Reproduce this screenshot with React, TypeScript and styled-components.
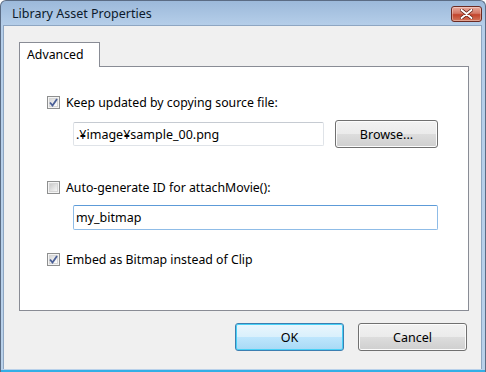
import styled, { createGlobalStyle, css } from "styled-components";

const GlobalStyle = createGlobalStyle`
  html, body {
    margin: 0;
    padding: 0;
    background: #ffffff;
  }
  body {
    font-family: "Noto Sans", "Liberation Sans", sans-serif;
    font-size: 12.3px;
    color: #000;
  }
`;

const Window = styled.div`
  width: 486px;
  height: 372px;
  box-sizing: border-box;
  display: flex;
  flex-direction: column;
  border: 1px solid #5b6c84;
  border-bottom: none;
  border-radius: 6px 6px 0 0;
  background: linear-gradient(#9cb9da 0px, #b5cee9 24px, #b9d1ea 100%);
  padding: 0 3px 3px 2px;
  overflow: hidden;
  position: relative;

  &::after {
    content: "";
    position: absolute;
    left: 0;
    right: 0;
    bottom: 0;
    height: 2px;
    background: #33afe6;
  }
`;

const TitleBar = styled.div`
  height: 24px;
  display: flex;
  align-items: center;
  justify-content: space-between;
  padding: 0 0 0 9px;
`;

const Title = styled.span`
  font-size: 12.5px;
  color: #0c1a2c;
  margin-top: 1px;
`;

const CloseButton = styled.div`
  width: 31px;
  height: 16px;
  box-sizing: border-box;
  margin-top: 1px;
  border: 1px solid #6b2a22;
  border-radius: 3px;
  background: linear-gradient(#e9a99c 0%, #d47866 45%, #c3442c 55%, #d2765c 100%);
  display: flex;
  align-items: center;
  justify-content: center;
  box-shadow: inset 0 0 0 1px rgba(255, 255, 255, 0.35);
`;

const Body = styled.div`
  flex: 1;
  background: #f0f0f0;
  border: 1px solid #8ea6c2;
  border-bottom: none;
  padding: 15px 12px 0 15px;
  display: flex;
  flex-direction: column;
`;

const TabStrip = styled.div`
  display: flex;
  height: 25px;
`;

const Tab = styled.div`
  width: 81px;
  box-sizing: border-box;
  background: #ffffff;
  border: 1px solid #898c95;
  border-bottom: none;
  padding: 3px 0 0 7px;
  position: relative;
  top: 1px;
  z-index: 1;
`;

const Panel = styled.div`
  height: 245px;
  box-sizing: border-box;
  background: #ffffff;
  border: 1px solid #898c95;
  padding: 27px 30px 0 27px;
  display: flex;
  flex-direction: column;
`;

const CheckRow = styled.label<{ $gap?: number }>`
  display: flex;
  align-items: center;
  gap: 6px;
  height: 16px;
  margin-top: ${(p) => p.$gap ?? 0}px;
`;

const Box = styled.span<{ $checked?: boolean }>`
  width: 13px;
  height: 13px;
  box-sizing: border-box;
  border: 1px solid #8e8f8f;
  background: #f4f4f4;
  display: flex;
  align-items: center;
  justify-content: center;
  position: relative;
  &::before {
    content: "";
    position: absolute;
    inset: 1px;
    border: 1px solid #d6d6d6;
    background: linear-gradient(135deg, #cbcbcb, #f6f6f6);
  }
  ${(p) =>
    p.$checked &&
    css`
      &::before {
        background: linear-gradient(135deg, #d8d8d8, #ffffff);
      }
    `}
  svg {
    position: relative;
  }
`;

const FieldRow = styled.div<{ $gap: number }>`
  display: flex;
  align-items: center;
  gap: 11px;
  margin-top: ${(p) => p.$gap}px;
  padding-left: 26px;
`;

const TextBox = styled.div<{ $width: number; $focus?: boolean }>`
  width: ${(p) => p.$width}px;
  height: 24px;
  box-sizing: border-box;
  background: #fff;
  border: 1px solid #dfe3e8;
  border-top-color: #c6cbd2;
  border-radius: 2px;
  padding: 0 4px 0 2px;
  display: flex;
  align-items: center;
  font-size: 12.5px;
  ${(p) =>
    p.$focus &&
    css`
      height: 25px;
      border-color: #8fbce7;
      border-top-color: #5d9bd8;
    `}
`;

const Button = styled.div<{ $default?: boolean; $width: number }>`
  width: ${(p) => p.$width}px;
  height: 28px;
  box-sizing: border-box;
  border: 1px solid #707070;
  border-radius: 3px;
  background: linear-gradient(#f2f2f2 0%, #ebebeb 49%, #dddddd 50%, #cfcfcf 100%);
  box-shadow: inset 0 0 0 1px #fcfcfc;
  display: flex;
  align-items: center;
  justify-content: center;
  font-size: 12.5px;
  ${(p) =>
    p.$default &&
    css`
      border-color: #3c7fb1;
      background: linear-gradient(#eaf6fd 0%, #d9f0fc 49%, #bee6fd 50%, #a7d9f5 100%);
      box-shadow: inset 0 0 0 1px #48d0f6;
    `}
`;

const Footer = styled.div`
  display: flex;
  justify-content: flex-end;
  gap: 14px;
  margin-top: 12px;
  padding-right: 2px;
`;

const Check = () => (
  <svg width="9" height="9" viewBox="0 0 9 9">
    <path d="M1 4.5 L3.5 7.5 L8 1" fill="none" stroke="#4a5f97" strokeWidth="1.8" />
  </svg>
);

const CheckBox = ({ checked, label, gap }: { checked?: boolean; label: string; gap?: number }) => (
  <CheckRow $gap={gap}>
    <Box $checked={checked}>{checked && <Check />}</Box>
    <span>{label}</span>
  </CheckRow>
);

const App = () => {
  return (
    <>
      <GlobalStyle />
      <Window>
        <TitleBar>
          <Title>Library Asset Properties</Title>
          <CloseButton>
            <svg width="13" height="10" viewBox="0 0 13 10">
              <path
                d="M1.5 1 L11.5 9 M11.5 1 L1.5 9"
                stroke="#5b1d12"
                strokeWidth="3.4"
                strokeLinecap="round"
              />
              <path
                d="M1.5 1 L11.5 9 M11.5 1 L1.5 9"
                stroke="#ffffff"
                strokeWidth="2"
                strokeLinecap="round"
              />
            </svg>
          </CloseButton>
        </TitleBar>
        <Body>
          <TabStrip>
            <Tab>Advanced</Tab>
          </TabStrip>
          <Panel>
            <CheckBox checked label="Keep updated by copying source file:" />
            <FieldRow $gap={10}>
              <TextBox $width={251}>.¥image¥sample_00.png</TextBox>
              <Button $width={103}>Browse...</Button>
            </FieldRow>
            <CheckBox label="Auto-generate ID for attachMovie():" gap={31} />
            <FieldRow $gap={10}>
              <TextBox $width={367} $focus>
                my_bitmap
              </TextBox>
            </FieldRow>
            <CheckBox checked label="Embed as Bitmap instead of Clip" gap={21} />
          </Panel>
          <Footer>
            <Button $default $width={109}>
              OK
            </Button>
            <Button $width={109}>Cancel</Button>
          </Footer>
        </Body>
      </Window>
    </>
  );
};

export default App;
